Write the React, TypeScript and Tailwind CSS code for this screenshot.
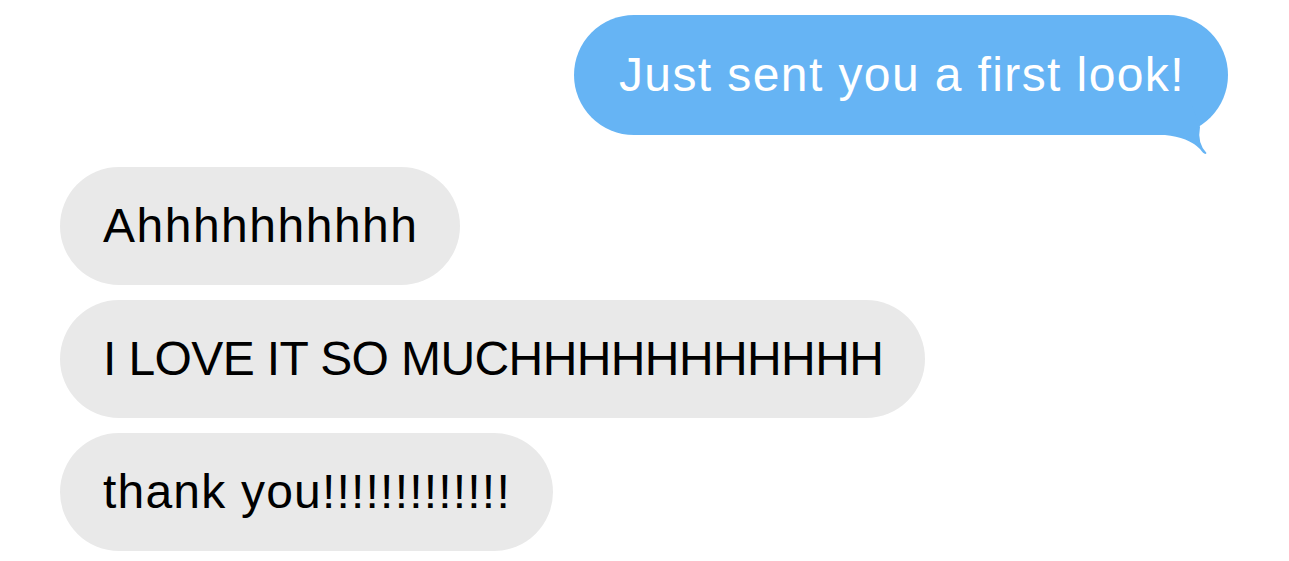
const grayMessages = [
  { text: "Ahhhhhhhhhh", tracking: "tracking-[1.5px]" },
  { text: "I LOVE IT SO MUCHHHHHHHHHHH", tracking: "tracking-[-0.6px]" },
  { text: "thank you!!!!!!!!!!!!!", tracking: "tracking-[1.2px]" },
];

function BubbleTail() {
  return (
    <svg
      className="absolute right-[-2px] bottom-[-25px] w-[70px] h-[60px]"
      viewBox="0 0 70 60"
      fill="#66b4f4"
    >
      <path d="M5 35 Q28 37 40 49 Q45 56 46.5 53 Q37 43 40 27 L30 0 L5 0 Z" />
    </svg>
  );
}

export default function App() {
  return (
    <div className="w-[1289px] h-[561px] bg-white overflow-hidden flex flex-col pt-[15px] font-['Liberation_Sans',Arial,sans-serif] text-[48px] leading-none">
      <div className="flex justify-end pr-[61px]">
        <div className="relative h-[120px] flex items-center pl-[45px] pr-[43px] rounded-full bg-[#66b4f4] text-white tracking-[1.4px]">
          <span className="relative z-10">Just sent you a first look!</span>
          <BubbleTail />
        </div>
      </div>

      <div className="flex flex-col items-start gap-[15px] pl-[60px] mt-[32px]">
        {grayMessages.map((m) => (
          <div
            key={m.text}
            className={`h-[118px] flex items-center pl-[43px] pr-[42px] rounded-full bg-[#e9e9e9] text-black ${m.tracking}`}
          >
            {m.text}
          </div>
        ))}
      </div>
    </div>
  );
}
